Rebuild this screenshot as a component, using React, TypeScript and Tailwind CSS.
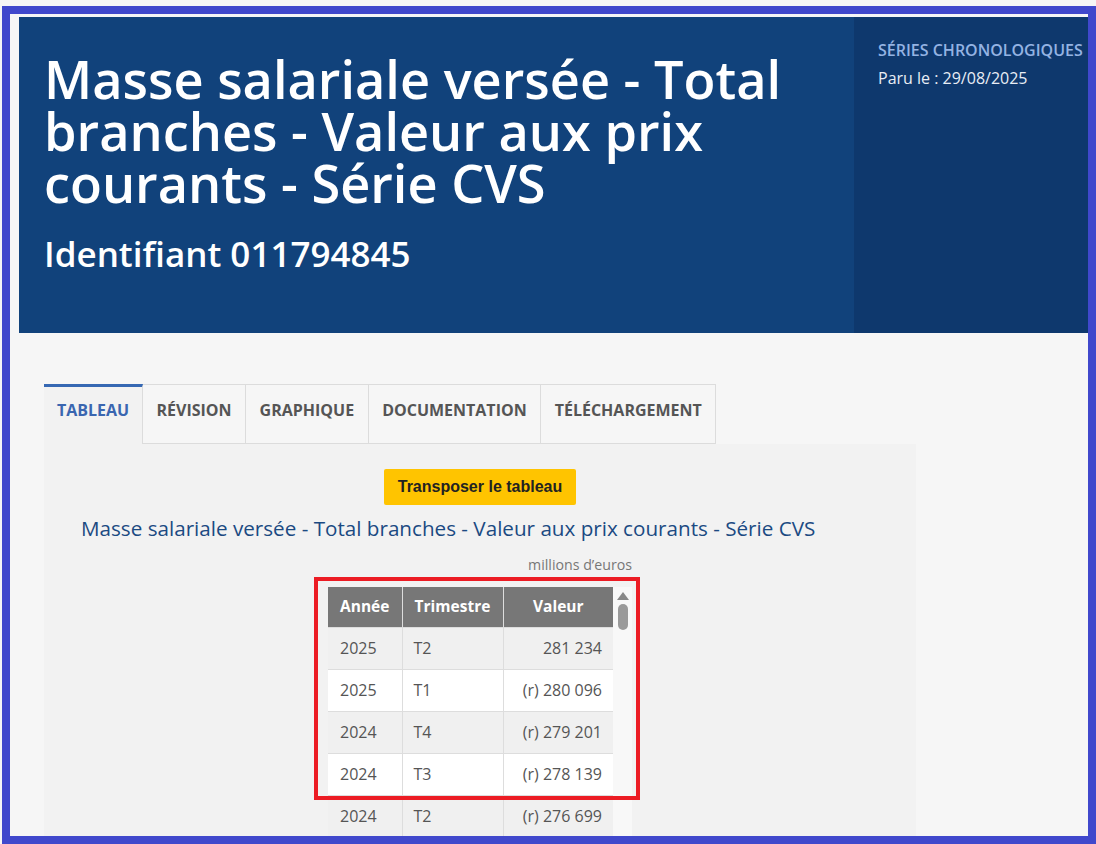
import React from "react";

const rows = [
  ["2025", "T2", "281 234"],
  ["2025", "T1", "(r) 280 096"],
  ["2024", "T4", "(r) 279 201"],
  ["2024", "T3", "(r) 278 139"],
  ["2024", "T2", "(r) 276 699"],
  ["2024", "T1", "(r) 275 010"],
];

const tabs = ["TABLEAU", "RÉVISION", "GRAPHIQUE", "DOCUMENTATION", "TÉLÉCHARGEMENT"];

export default function App() {
  return (
    <div
      className="w-[1096px] h-[844px] bg-[#f6f6f6] pt-[6px] pl-[2px] overflow-hidden"
      style={{ fontFamily: '"Open Sans", "Noto Sans", sans-serif' }}
    >
      <div className="w-[1094px] h-[838px] border-[8px] border-[#4048cc] bg-[#f6f6f6] overflow-hidden">
        {/* Header */}
        <div className="ml-[9px] mt-[3px] h-[316px] flex">
          <div className="w-[835px] bg-[#11427b] pl-[25px] pt-[36px] text-white">
            <h1 className="text-[52.3px] leading-[52px] font-semibold">
              Masse salariale versée - Total branches - Valeur aux prix courants - Série CVS
            </h1>
            <div className="mt-[25px] text-[35px] leading-[40px] font-semibold">Identifiant 011794845</div>
          </div>
          <div className="flex-1 bg-[#0e386d] pl-[24px] pt-[21px] whitespace-nowrap overflow-hidden">
            <div className="text-[16px] leading-[24px] font-semibold text-[#94b3e3]">SÉRIES CHRONOLOGIQUES</div>
            <div className="mt-[5px] text-[16px] leading-[22px] text-[#e8edf5]">Paru le : 29/08/2025</div>
          </div>
        </div>

        {/* Main */}
        <div className="pl-[34px] pt-[51px]">
          <div className="flex h-[60px]">
            {tabs.map((t, i) =>
              i === 0 ? (
                <div
                  key={t}
                  className="w-[99px] flex justify-center pt-[12px] bg-[#f2f2f2] border-t-[3px] border-[#3668b3] border-r border-r-[#dcdcdc] text-[16px] leading-[22px] font-bold text-[#3a66b0]"
                >
                  {t}
                </div>
              ) : (
                <div
                  key={t}
                  className="px-[13.5px] pt-[14px] bg-[#f6f6f6] border border-l-0 border-[#dcdcdc] text-[16px] leading-[22px] font-bold text-[#555555]"
                >
                  {t}
                </div>
              )
            )}
          </div>
          <div className="w-[872px] h-[400px] bg-[#f2f2f2] flex flex-col">
            <div className="mt-[25px] flex justify-center">
              <button
                className="h-[36px] w-[192px] rounded-[2px] bg-[#ffc400] text-[16px] font-bold text-[#222]"
                style={{ fontFamily: '"Liberation Sans", Arial, sans-serif' }}
              >
                Transposer le tableau
              </button>
            </div>
            <div className="mt-[10px] pl-[37px] text-[20.65px] leading-[26px] text-[#1b4a82]">
              Masse salariale versée - Total branches - Valeur aux prix courants - Série CVS
            </div>
            <div className="mx-auto w-[304px]">
              <div className="mt-[15px] text-right text-[14.2px] leading-[18px] text-[#777]">
                millions d’euros
              </div>
              <div className="relative mt-[13px] flex h-[260px] bg-[#f8f8f8]">
                <table className="w-[285px] border-collapse text-[16px] table-fixed">
                  <colgroup>
                    <col className="w-[74px]" />
                    <col className="w-[101px]" />
                    <col className="w-[110px]" />
                  </colgroup>
                  <thead>
                    <tr className="h-[40px] bg-[#777777] text-white text-[15.5px]">
                      <th className="font-bold border-r border-[#dddddd]">Année</th>
                      <th className="font-bold border-r border-[#dddddd]">Trimestre</th>
                      <th className="font-bold">Valeur</th>
                    </tr>
                  </thead>
                  <tbody className="text-[#555]">
                    {rows.map((r, i) => (
                      <tr key={i} className={`h-[42px] ${i % 2 === 0 ? "bg-[#f0f0f0]" : "bg-white"}`}>
                        <td className="pl-[12px] border border-[#dddddd] border-l-0">{r[0]}</td>
                        <td className="pl-[11px] border border-[#dddddd]">{r[1]}</td>
                        <td className="pr-[11px] text-right border border-[#dddddd] border-r-0">{r[2]}</td>
                      </tr>
                    ))}
                  </tbody>
                </table>
                <div className="w-[19px] flex flex-col items-center pt-[5px]">
                  <div className="w-0 h-0 border-l-[6px] border-r-[6px] border-b-[8px] border-l-transparent border-r-transparent border-b-[#888]" />
                  <div className="mt-[4px] w-[10px] h-[26px] rounded-full bg-[#9a9a9a]" />
                </div>
                <div className="absolute left-[-14px] top-[-10px] w-[326px] h-[223px] border-[4px] border-[#ec1c24]" />
              </div>
            </div>
          </div>
        </div>
      </div>
    </div>
  );
}
